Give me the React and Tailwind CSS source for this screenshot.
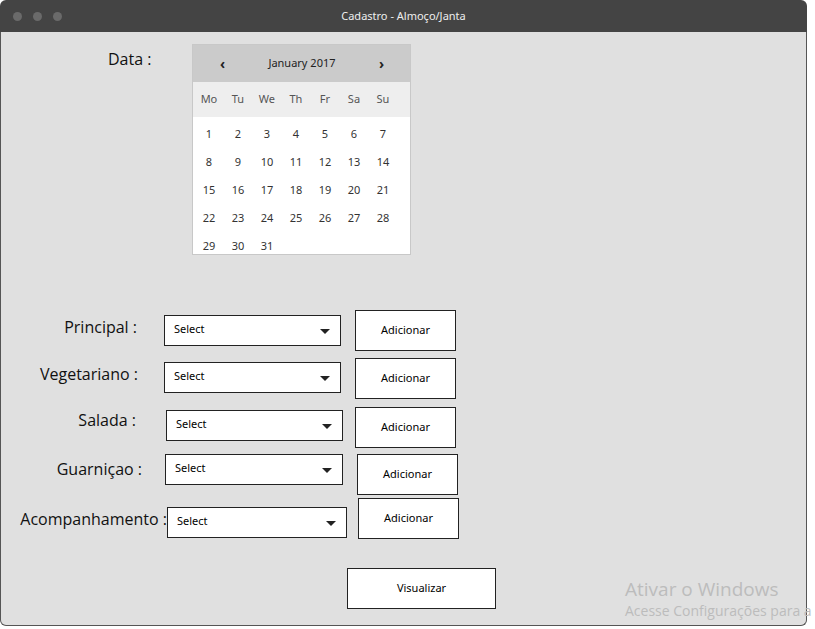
const days = ["Mo", "Tu", "We", "Th", "Fr", "Sa", "Su"];
const weeks = [
  [1, 2, 3, 4, 5, 6, 7],
  [8, 9, 10, 11, 12, 13, 14],
  [15, 16, 17, 18, 19, 20, 21],
  [22, 23, 24, 25, 26, 27, 28],
  [29, 30, 31, null, null, null, null],
];

function Calendar() {
  return (
    <div className="w-[219px] h-[211px] overflow-hidden border border-[#c8c8c8] bg-white font-['Noto_Sans',sans-serif] text-[11px] text-[#333]">
      <div className="h-[37px] bg-[#cbcbcb] flex items-center text-[#222]">
        <span className="w-[58px] text-center text-[14px] font-bold">‹</span>
        <span className="flex-1 text-center">January 2017</span>
        <span className="w-[58px] text-center text-[14px] font-bold">›</span>
      </div>
      <div className="h-[35px] bg-[#eeeeee] grid grid-cols-7 items-center pl-px pr-[13px] text-[#555]">
        {days.map((d) => (
          <span key={d} className="text-center">
            {d}
          </span>
        ))}
      </div>
      <div className="pt-[3px] pl-px pr-[13px]">
        {weeks.map((w, i) => (
          <div key={i} className="grid grid-cols-7 h-[28px] items-center">
            {w.map((n, j) => (
              <span key={j} className="text-center">
                {n}
              </span>
            ))}
          </div>
        ))}
      </div>
    </div>
  );
}

function Select({ className }) {
  return (
    <div
      className={`h-[31px] bg-white border border-[#222] flex items-center justify-between pl-[9px] pr-[10px] font-['Noto_Sans',sans-serif] text-[11px] text-black ${className}`}
    >
      <span className="-mt-[2px]">Select</span>
      <svg width="10" height="5" viewBox="0 0 10 5" className="mt-[2px]">
        <path d="M0 0H10L5 5Z" fill="#222" />
      </svg>
    </div>
  );
}

function AddButton({ className }) {
  return (
    <button
      type="button"
      className={`w-[101px] h-[41px] bg-white border border-[#222] font-['Noto_Sans',sans-serif] text-[11px] text-black ${className}`}
    >
      Adicionar
    </button>
  );
}

export default function App() {
  return (
    <div className="w-[815px] h-[629px] bg-white">
      <div className="relative w-[807px] h-[626px] flex flex-col">
        <div className="h-[32px] bg-[#444444] rounded-t-[6px] flex items-center relative shrink-0">
          <div className="flex gap-[11px] pl-[13px]">
            <span className="w-[9px] h-[9px] rounded-full bg-[#6a6a6a]"></span>
            <span className="w-[9px] h-[9px] rounded-full bg-[#6a6a6a]"></span>
            <span className="w-[9px] h-[9px] rounded-full bg-[#6a6a6a]"></span>
          </div>
          <span className="absolute left-0 right-0 text-center text-[11px] text-[#eeeeee] font-['Noto_Sans',sans-serif]">
            Cadastro - Almoço/Janta
          </span>
        </div>

        <div className="flex-1 bg-[#e0e0e0] border-x border-b border-[#555] rounded-b-[6px] font-['Open_Sans',sans-serif] text-[16px] text-[#111]">
          <div className="flex items-start mt-[12px]">
            <span className="ml-[107px] mt-[3px] leading-[24px]">Data :</span>
            <div className="ml-[41px]">
              <Calendar />
            </div>
          </div>

          <div className="flex items-start mt-[55px]">
            <span className="w-[136px] text-right mt-[5px] leading-[24px]">Principal :</span>
            <Select className="ml-[27px] mt-[5px] w-[177px]" />
            <AddButton className="ml-[14px]" />
          </div>

          <div className="flex items-start mt-[7px]">
            <span className="w-[137px] text-right mt-[4px] leading-[24px]">Vegetariano :</span>
            <Select className="ml-[26px] mt-[4px] w-[177px]" />
            <AddButton className="ml-[14px]" />
          </div>

          <div className="flex items-start mt-[8px]">
            <span className="w-[135px] text-right mt-[1px] leading-[24px]">Salada :</span>
            <Select className="ml-[30px] mt-[3px] w-[177px]" />
            <AddButton className="ml-[12px]" />
          </div>

          <div className="flex items-start mt-[6px]">
            <span className="w-[141px] text-right mt-[3px] leading-[24px]">Guarniçao :</span>
            <Select className="ml-[23px] w-[178px]" />
            <AddButton className="ml-[14px]" />
          </div>

          <div className="flex items-start mt-[3px]">
            <span className="w-[166px] text-right mt-[9px] leading-[24px] whitespace-nowrap">
              Acompanhamento :
            </span>
            <Select className="mt-[9px] w-[180px]" />
            <AddButton className="ml-[11px]" />
          </div>

          <button
            type="button"
            className="ml-[346px] mt-[29px] w-[149px] h-[41px] bg-white border border-[#222] font-['Noto_Sans',sans-serif] text-[11px] text-black"
          >
            Visualizar
          </button>
        </div>

        <div className="absolute left-[625px] top-[576px] font-['Open_Sans',sans-serif] text-[#bcbcbc] whitespace-nowrap pointer-events-none">
          <div className="text-[19px] leading-[26px]">Ativar o Windows</div>
          <div className="text-[14px] leading-[18px]">Acesse Configurações para a</div>
        </div>
      </div>
    </div>
  );
}
